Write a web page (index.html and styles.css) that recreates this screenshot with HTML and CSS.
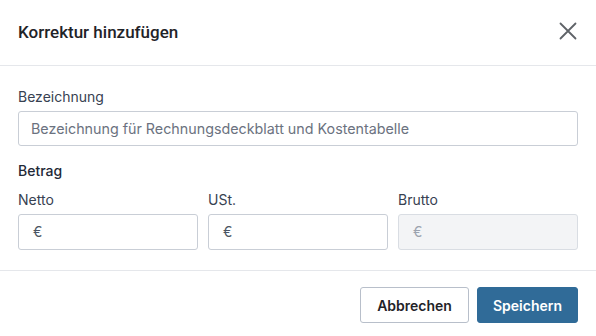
FILE: index.html
```html
<!DOCTYPE html>
<html lang="de">
<head>
    <meta charset="UTF-8">
    <meta name="viewport" content="width=device-width, initial-scale=1.0">
    <title>Korrektur hinzufügen</title>
    <link rel="stylesheet" href="styles.css">
</head>
<body>
    <div class="modal">
        <div class="modal-header">
            <h1>Korrektur hinzufügen</h1>
            <button class="close" aria-label="Schließen">
                <svg width="18" height="18" viewBox="0 0 18 18">
                    <path d="M1.5 1.5 L16.5 16.5 M16.5 1.5 L1.5 16.5" stroke="#5f6368" stroke-width="1.8" stroke-linecap="round" fill="none"/>
                </svg>
            </button>
        </div>

        <div class="modal-body">
            <div class="form-group">
                <label for="name">Bezeichnung</label>
                <input type="text" id="name" placeholder="Bezeichnung für Rechnungsdeckblatt und Kostentabelle">
            </div>

            <h2>Betrag</h2>

            <div class="amounts">
                <div class="field">
                    <label for="netto">Netto</label>
                    <div class="money">
                        <span class="currency">€</span>
                        <input type="text" id="netto">
                    </div>
                </div>
                <div class="field">
                    <label for="ust">USt.</label>
                    <div class="money">
                        <span class="currency">€</span>
                        <input type="text" id="ust">
                    </div>
                </div>
                <div class="field">
                    <label for="brutto">Brutto</label>
                    <div class="money disabled">
                        <span class="currency">€</span>
                        <input type="text" id="brutto" disabled>
                    </div>
                </div>
            </div>
        </div>

        <div class="modal-footer">
            <button class="btn btn-secondary">Abbrechen</button>
            <button class="btn btn-primary">Speichern</button>
        </div>
    </div>
</body>
</html>
```

FILE: styles.css
```css
* {
    box-sizing: border-box;
}
body {
    margin: 0;
    font-family: Inter, "Noto Sans", sans-serif;
    color: #374151;
    background-color: #fff;
}
.modal {
    width: 596px;
    background-color: #fff;
}
.modal-header {
    height: 66px;
    display: flex;
    align-items: center;
    justify-content: space-between;
    padding: 0 18px 2px 18px;
    border-bottom: 1px solid #e5e7eb;
}
.modal-header h1 {
    margin: 0;
    font-family: Roboto, "Liberation Sans", sans-serif;
    font-size: 17px;
    font-weight: 500;
    color: #1f2328;
}
.close {
    border: none;
    background: none;
    padding: 0;
    margin-right: 1px;
    margin-top: -1px;
    width: 18px;
    height: 18px;
    cursor: pointer;
}
.modal-body {
    padding: 21px 18px 20px 18px;
    border-bottom: 1px solid #e5e7eb;
}
label {
    display: block;
    font-size: 14px;
    line-height: 20px;
    color: #374151;
    margin-bottom: 4px;
}
input {
    width: 100%;
    height: 35px;
    border: 1px solid #c9ced6;
    border-radius: 3px;
    font-family: Inter, "Noto Sans", sans-serif;
    font-size: 14px;
    color: #374151;
    padding: 0 12px;
    outline: none;
}
input::placeholder {
    color: #6b7280;
    font-size: 14.3px;
}
.form-group {
    margin-bottom: 15px;
}
h2 {
    margin: 0 0 9px 0;
    font-size: 14px;
    line-height: 20px;
    font-weight: 500;
    color: #1f2937;
}
.amounts {
    display: grid;
    grid-template-columns: 1fr 1fr 1fr;
    gap: 10px;
}
.money {
    position: relative;
}
.money input {
    height: 36px;
    padding-left: 30px;
}
.currency {
    position: absolute;
    left: 15px;
    top: 8px;
    font-size: 14px;
    line-height: 20px;
    color: #4b5563;
}
.money.disabled input {
    background-color: #f3f4f6;
    border-color: #d9dde3;
}
.money.disabled .currency {
    color: #9ca3af;
}
.modal-footer {
    display: flex;
    justify-content: flex-end;
    gap: 8px;
    padding: 16px 18px;
}
.btn {
    height: 36px;
    padding: 0 16px;
    border-radius: 3px;
    font-family: Inter, "Noto Sans", sans-serif;
    font-size: 14px;
    font-weight: 600;
    cursor: pointer;
}
.btn-secondary {
    background-color: #fff;
    border: 1px solid #b8bfca;
    color: #1f2328;
}
.btn-primary {
    padding: 0 15px;
    background-color: #306b98;
    border: 1px solid #306b98;
    color: #fff;
}
```
